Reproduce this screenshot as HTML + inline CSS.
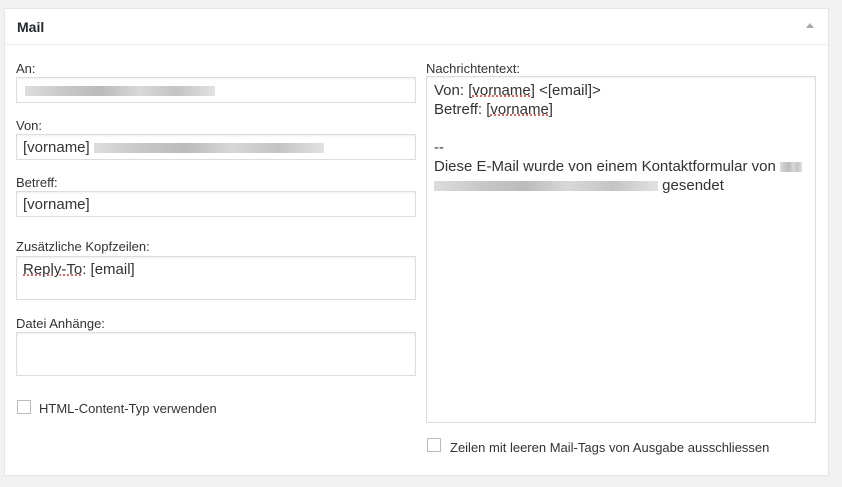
<!DOCTYPE html>
<html><head><style>
body{margin:0;width:842px;height:487px;background:#f1f1f1;font-family:"Liberation Sans",sans-serif;color:#222;position:relative;overflow:hidden}
.p{position:absolute;left:4px;top:8px;width:823px;height:466px;background:#fff;border:1px solid #e5e5e5}
.h{position:absolute;left:0;top:0;right:0;height:35px;border-bottom:1px solid #eee}
.h b{position:absolute;left:12px;top:10px;font-size:14px;color:#23282d}
.tri{position:absolute;right:14px;top:14px;width:0;height:0;border-left:4px solid transparent;border-right:4px solid transparent;border-bottom:5px solid #aaa}
.l{position:absolute;font-size:13px;color:#333}
.i{position:absolute;border:1px solid #ddd;box-shadow:inset 0 1px 2px rgba(0,0,0,.07);font-size:15px;color:#333;box-sizing:border-box;padding:4px 6px}
.bl{display:inline-block;height:10px;background:linear-gradient(90deg,#ddd,#c8c8c8,#bbb,#d8d8d8,#c4c4c4,#e2e2e2);vertical-align:middle}
.cb{position:absolute;width:14px;height:14px;border:1px solid #bbb;box-sizing:border-box;background:#fff}
u{text-decoration:underline dotted #d33}
</style></head><body>
<div class="p"><div class="h"><b>Mail</b><div class="tri"></div></div></div>
<div class="l" style="left:16px;top:61px">An:</div>
<div class="i" style="left:16px;top:77px;width:400px;height:26px"><span class="bl" style="width:190px;margin-left:2px"></span></div>
<div class="l" style="left:16px;top:118px">Von:</div>
<div class="i" style="left:16px;top:134px;width:400px;height:26px">[vorname] <span class="bl" style="width:230px"></span></div>
<div class="l" style="left:16px;top:175px">Betreff:</div>
<div class="i" style="left:16px;top:191px;width:400px;height:26px">[vorname]</div>
<div class="l" style="left:16px;top:239px">Zusätzliche Kopfzeilen:</div>
<div class="i" style="left:16px;top:256px;width:400px;height:44px"><u>Reply-To</u>: [email]</div>
<div class="l" style="left:16px;top:316px">Datei Anhänge:</div>
<div class="i" style="left:16px;top:332px;width:400px;height:44px"></div>
<div class="cb" style="left:17px;top:400px"></div>
<div class="l" style="left:39px;top:401px">HTML-Content-Typ verwenden</div>
<div class="l" style="left:426px;top:61px">Nachrichtentext:</div>
<div class="i" style="left:426px;top:76px;width:390px;height:347px;line-height:19px;padding:4px 7px">Von: [<u>vorname</u>] &lt;[email]&gt;<br>Betreff: [<u>vorname</u>]<br><br>--<br>Diese E-Mail wurde von einem Kontaktformular von <span class="bl" style="width:22px"></span><br><span class="bl" style="width:224px"></span> gesendet</div>
<div class="cb" style="left:427px;top:438px"></div>
<div class="l" style="left:450px;top:440px">Zeilen mit leeren Mail-Tags von Ausgabe ausschliessen</div>
</body></html>
